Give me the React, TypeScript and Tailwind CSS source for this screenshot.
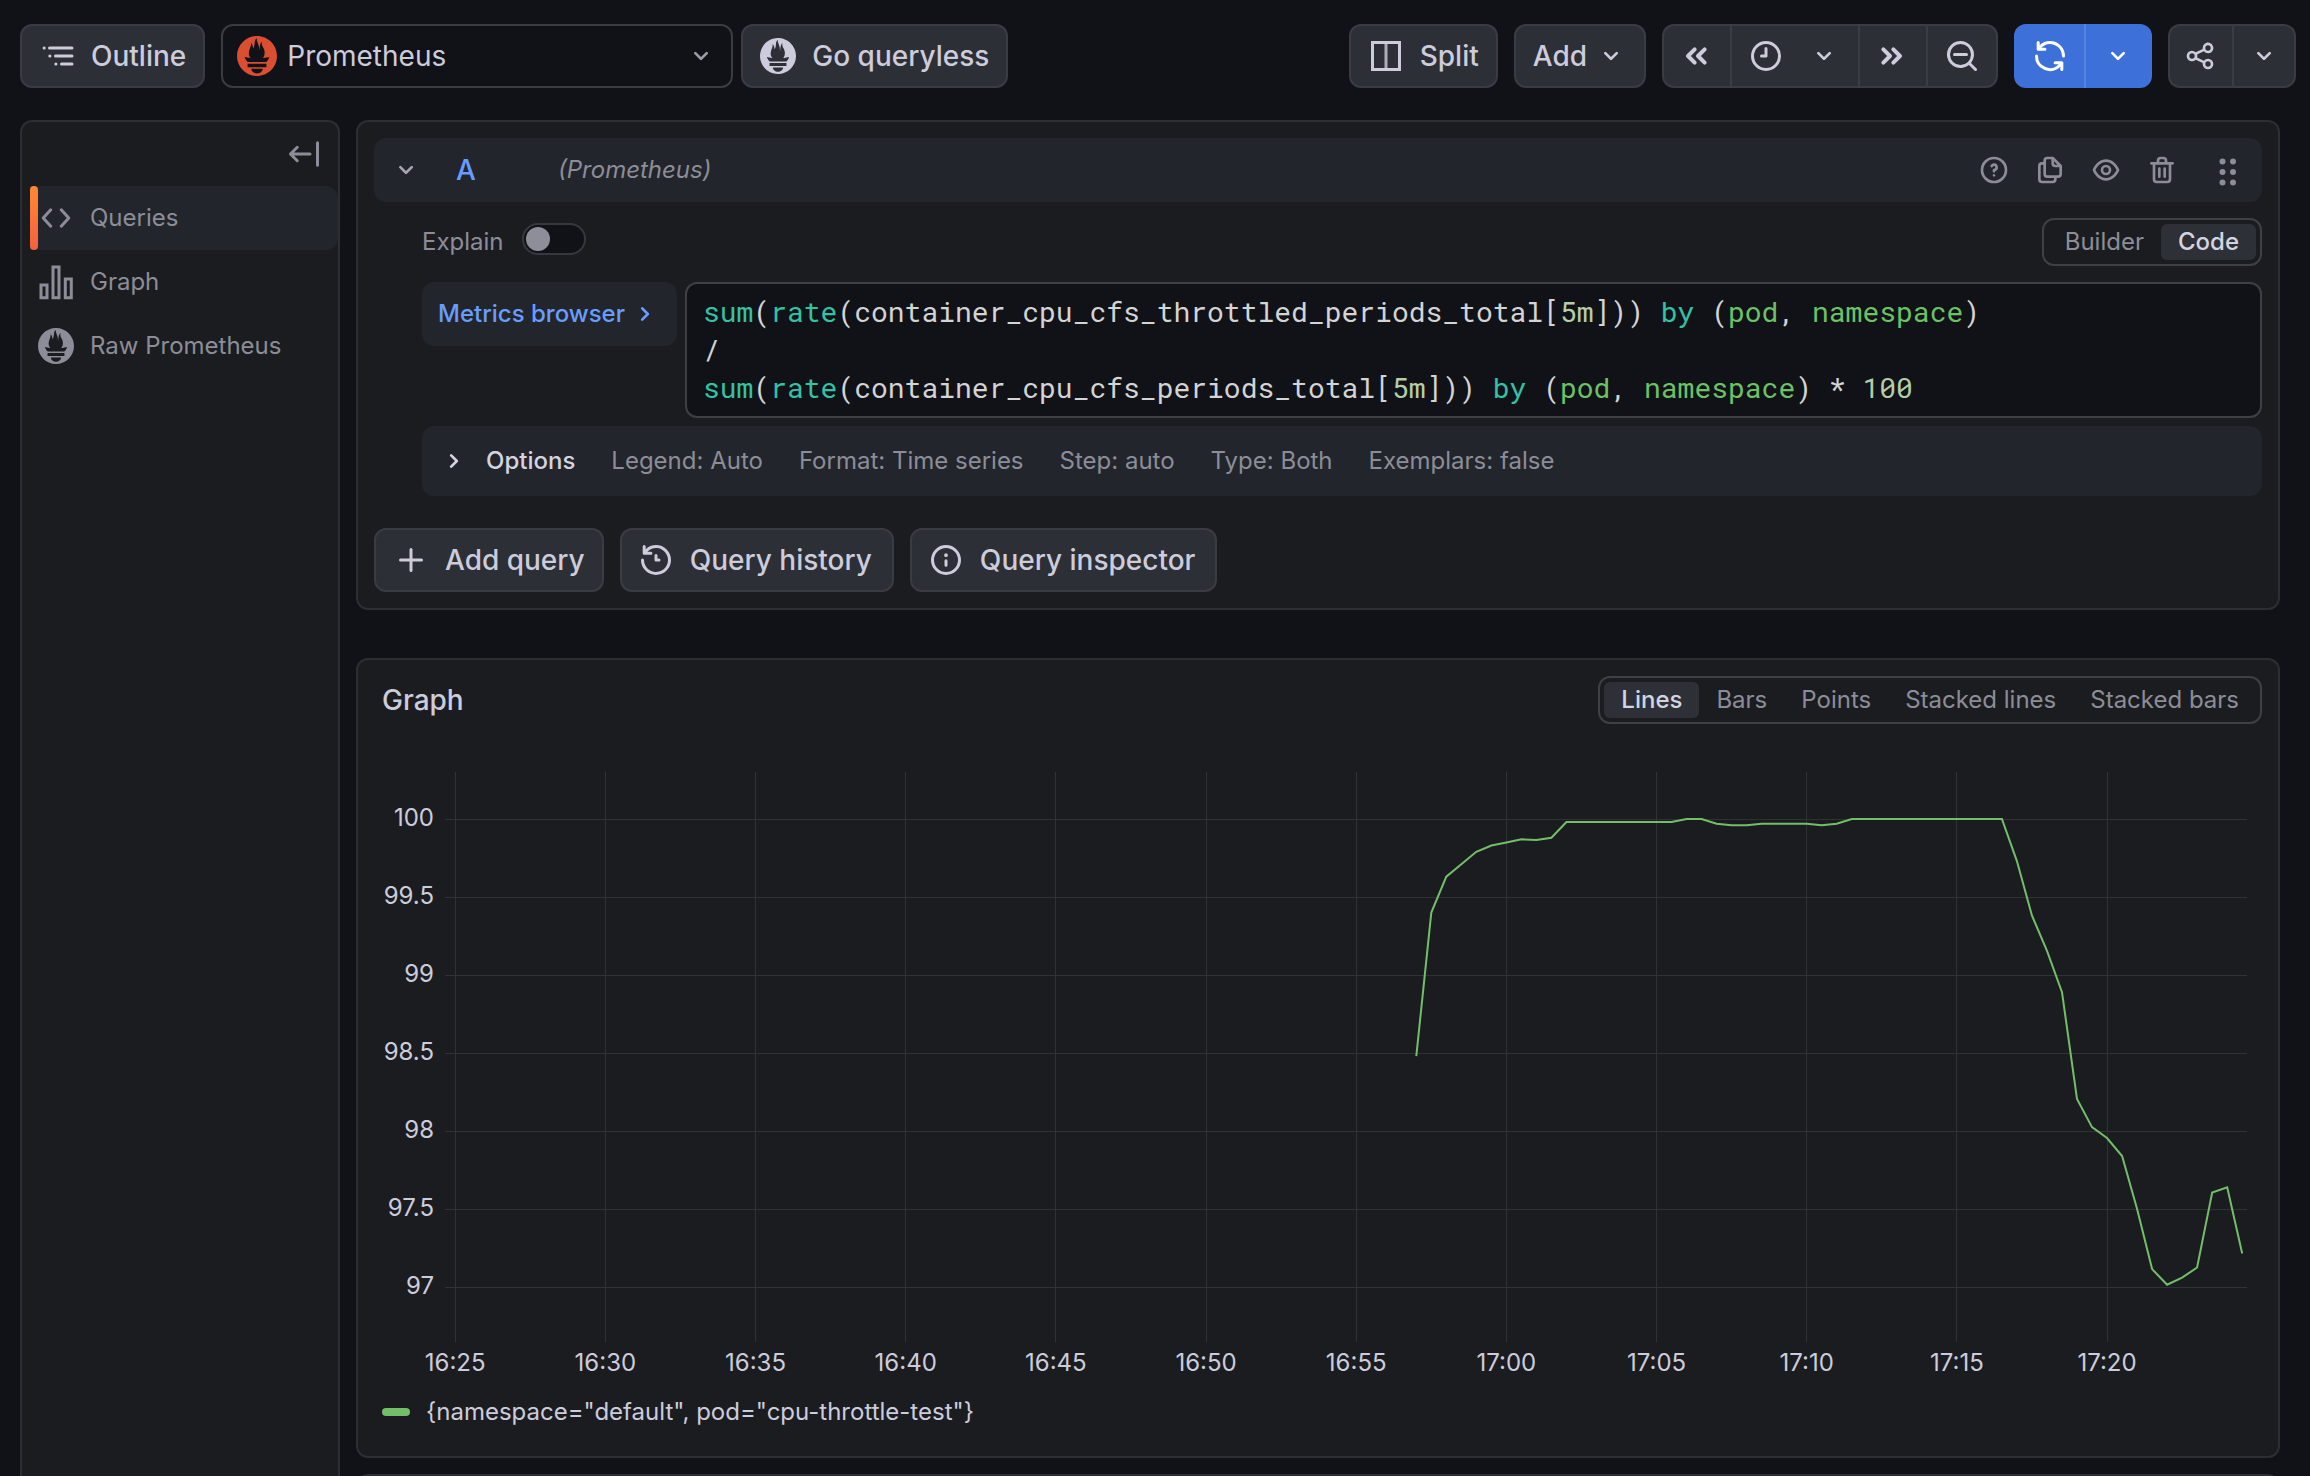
import { useLayoutEffect, useRef, useState, type ReactNode } from "react";
import { SiPrometheus } from "react-icons/si";
import clsx from "clsx";

const icons = {
  angleDown:
    "M17,9.17a1,1,0,0,0-1.41,0L12,12.71,8.46,9.17a1,1,0,0,0-1.41,0,1,1,0,0,0,0,1.42l4.24,4.24a1,1,0,0,0,1.42,0L17,10.59A1,1,0,0,0,17,9.17Z",
  angleRight:
    "M14.83,11.29,10.59,7.05a1,1,0,0,0-1.42,0,1,1,0,0,0,0,1.41L12.71,12,9.17,15.54a1,1,0,0,0,0,1.41,1,1,0,0,0,.71.29,1,1,0,0,0,.71-.29l4.24-4.24A1,1,0,0,0,14.83,11.29Z",
  clock:
    "M12,6a1,1,0,0,0-1,1v4H9a1,1,0,0,0,0,2h3a1,1,0,0,0,1-1V7A1,1,0,0,0,12,6Zm0-4A10,10,0,1,0,22,12,10,10,0,0,0,12,2Zm0,18a8,8,0,1,1,8-8A8,8,0,0,1,12,20Z",
  searchMinus:
    "M21.71,20.29,18,16.61A9,9,0,1,0,16.61,18l3.68,3.68a1,1,0,0,0,1.42,0A1,1,0,0,0,21.71,20.29ZM11,18a7,7,0,1,1,7-7A7,7,0,0,1,11,18ZM15,10H7a1,1,0,0,0,0,2h8a1,1,0,0,0,0-2Z",
  sync:
    "M19.91,15.51H15.38a1,1,0,0,0,0,2h2.4A8,8,0,0,1,4,12a1,1,0,0,0-2,0,10,10,0,0,0,16.88,7.23V21a1,1,0,0,0,2,0V16.5A1,1,0,0,0,19.91,15.51ZM12,2A10,10,0,0,0,5.12,4.77V3a1,1,0,0,0-2,0V7.5a1,1,0,0,0,1,1h4.5a1,1,0,0,0,0-2H6.22A8,8,0,0,1,20,12a1,1,0,0,0,2,0A10,10,0,0,0,12,2Z",
  history:
    "M12,2A10,10,0,0,0,5.12,4.77V3a1,1,0,0,0-2,0V7.5a1,1,0,0,0,1,1H8.62a1,1,0,0,0,0-2H6.22A8,8,0,1,1,4,12a1,1,0,0,0-2,0A10,10,0,1,0,12,2Zm0,6a1,1,0,0,0-1,1v3a1,1,0,0,0,1,1h2a1,1,0,0,0,0-2H13V9A1,1,0,0,0,12,8Z",
  question:
    "M11.29,15.29a1.58,1.58,0,0,0-.12.15.76.76,0,0,0-.09.18.64.64,0,0,0-.06.18,1.36,1.36,0,0,0,0,.2.84.84,0,0,0,.08.38.9.9,0,0,0,.54.54.94.94,0,0,0,.76,0,.9.9,0,0,0,.54-.54A1,1,0,0,0,13,16a1,1,0,0,0-.29-.71A1,1,0,0,0,11.29,15.29ZM12,2A10,10,0,1,0,22,12,10,10,0,0,0,12,2Zm0,18a8,8,0,1,1,8-8A8,8,0,0,1,12,20ZM12,7A3,3,0,0,0,9.4,8.5a1,1,0,1,0,1.73,1A1,1,0,0,1,12,9a1,1,0,0,1,0,2,1,1,0,0,0-1,1v1a1,1,0,0,0,2,0v-.18A3,3,0,0,0,12,7Z",
  copy:
    "M21,8.94a1.31,1.31,0,0,0-.06-.27l0-.09a1.07,1.07,0,0,0-.19-.28h0l-6-6h0a1.07,1.07,0,0,0-.28-.19.32.32,0,0,0-.09,0A.88.88,0,0,0,14.05,2H10A3,3,0,0,0,7,5V6H6A3,3,0,0,0,3,9V19a3,3,0,0,0,3,3h8a3,3,0,0,0,3-3V18h1a3,3,0,0,0,3-3V9S21,9,21,8.94ZM15,5.41,17.59,8H16a1,1,0,0,1-1-1ZM15,19a1,1,0,0,1-1,1H6a1,1,0,0,1-1-1V9A1,1,0,0,1,6,8H7v7a3,3,0,0,0,3,3h5Zm4-4a1,1,0,0,1-1,1H10a1,1,0,0,1-1-1V5a1,1,0,0,1,1-1h3V7a3,3,0,0,0,3,3h3Z",
  eye:
    "M21.92,11.6C19.9,6.91,16.1,4,12,4S4.1,6.91,2.08,11.6a1,1,0,0,0,0,.8C4.1,17.09,7.9,20,12,20s7.9-2.91,9.92-7.6A1,1,0,0,0,21.92,11.6ZM12,18c-3.17,0-6.17-2.29-7.9-6C5.83,8.29,8.83,6,12,6s6.17,2.29,7.9,6C18.17,15.71,15.17,18,12,18ZM12,8a4,4,0,1,0,4,4A4,4,0,0,0,12,8Zm0,6a2,2,0,1,1,2-2A2,2,0,0,1,12,14Z",
  trash:
    "M10,18a1,1,0,0,0,1-1V11a1,1,0,0,0-2,0v6A1,1,0,0,0,10,18ZM20,6H16V5a3,3,0,0,0-3-3H11A3,3,0,0,0,8,5V6H4A1,1,0,0,0,4,8H5V19a3,3,0,0,0,3,3h8a3,3,0,0,0,3-3V8h1a1,1,0,0,0,0-2ZM10,5a1,1,0,0,1,1-1h2a1,1,0,0,1,1,1V6H10Zm7,14a1,1,0,0,1-1,1H8a1,1,0,0,1-1-1V8H17Zm-3-1a1,1,0,0,0,1-1V11a1,1,0,0,0-2,0v6A1,1,0,0,0,14,18Z",
  share:
    "M18,14a4,4,0,0,0-3.08,1.48l-5.1-2.35a3.64,3.64,0,0,0,0-2.26l5.1-2.35A4,4,0,1,0,14,6a4.17,4.17,0,0,0,.07.71L8.79,9.14a4,4,0,1,0,0,5.72l5.28,2.43A4.17,4.17,0,0,0,14,18a4,4,0,1,0,4-4ZM18,4a2,2,0,1,1-2,2A2,2,0,0,1,18,4ZM6,14a2,2,0,1,1,2-2A2,2,0,0,1,6,14Zm12,6a2,2,0,1,1,2-2A2,2,0,0,1,18,20Z",
  info:
    "M12,2A10,10,0,1,0,22,12,10,10,0,0,0,12,2Zm0,18a8,8,0,1,1,8-8A8,8,0,0,1,12,20Zm0-8.5a1,1,0,0,0-1,1v3a1,1,0,0,0,2,0v-3A1,1,0,0,0,12,11.5Zm0-4a1.25,1.25,0,1,0,1.25,1.25A1.25,1.25,0,0,0,12,7.5Z",
  plus: "M19,11H13V5a1,1,0,0,0-2,0v6H5a1,1,0,0,0,0,2h6v6a1,1,0,0,0,2,0V13h6a1,1,0,0,0,0-2Z",
};

function Icon({ name, className = "size-8" }: { name: keyof typeof icons; className?: string }) {
  return (
    <svg viewBox="0 0 24 24" fill="currentColor" className={clsx("shrink-0", className)} aria-hidden="true">
      <path d={icons[name]} />
    </svg>
  );
}

function StrokeIcon({ children, width = 2, className = "size-9" }: { children: ReactNode; width?: number; className?: string }) {
  return (
    <svg
      viewBox="0 0 24 24"
      fill="none"
      stroke="currentColor"
      strokeWidth={width}
      strokeLinecap="round"
      strokeLinejoin="round"
      className={clsx("shrink-0", className)}
      aria-hidden="true"
    >
      {children}
    </svg>
  );
}

const button =
  "flex h-16 items-center border-2 border-[#3a3c43] bg-[#2d2f36] text-[28px] font-medium whitespace-nowrap text-[#ccccdc]";

function RadioGroup({ name, options, value }: { name: string; options: string[]; value: string }) {
  const [selected, setSelected] = useState(value);
  return (
    <div role="radiogroup" aria-label={name} className="flex h-12 rounded-xl border-2 border-[#3e4046] p-1">
      {options.map((option) => (
        <label
          key={option}
          className={clsx(
            "relative flex items-center rounded-md px-[17px] text-2xl",
            option === selected ? "bg-[#2e3037] font-medium text-[#d4d4e0]" : "text-[#8c8d98]"
          )}
        >
          <input
            type="radio"
            name={name}
            value={option}
            checked={option === selected}
            onChange={() => setSelected(option)}
            className="absolute inset-0 appearance-none"
          />
          {option}
        </label>
      ))}
    </div>
  );
}

function Toolbar() {
  return (
    <header className="flex items-center gap-4 pr-3.5 pl-5">
      <button className={clsx(button, "gap-4 rounded-xl px-[17px]")}>
        <StrokeIcon>
          <path d="M7 6.7h15M11 12h11M15 17.3h7M3.4 6.7h.1M7.2 12h.1M11.2 17.3h.1" />
        </StrokeIcon>
        Outline
      </button>
      <div className="flex items-center gap-2">
        <div className="relative flex w-[512px] items-center text-[#ccccdc]">
          <SiPrometheus className="pointer-events-none absolute left-4 size-10 text-[#da4e31]" />
          <select
            aria-label="Data source"
            className="h-16 w-full appearance-none rounded-xl border-2 border-[#3a3c43] bg-[#111217] pr-14 pl-16 text-[28px]"
          >
            <option>Prometheus</option>
          </select>
          <Icon name="angleDown" className="pointer-events-none absolute right-4 size-8 text-[#9c9ca8]" />
        </div>
        <button className={clsx(button, "gap-4 rounded-xl px-[17px]")}>
          <SiPrometheus className="size-9" />
          Go queryless
        </button>
      </div>
      <div className="ml-auto flex items-center gap-4">
        <button className={clsx(button, "gap-4 rounded-xl px-[17px]")}>
          <StrokeIcon>
            <path d="M3 3h18v18H3z" strokeLinejoin="miter" />
            <path d="M12 3v18" className="opacity-80" />
          </StrokeIcon>
          Split
        </button>
        <button className={clsx(button, "gap-2 rounded-xl px-[17px]")}>
          Add
          <Icon name="angleDown" />
        </button>
        <div className="flex">
          <button aria-label="Move time range back" className={clsx(button, "rounded-l-xl border-r-0 pr-4.5 pl-4")}>
            <StrokeIcon width={3} className="size-8">
              <path d="M11 7l-5 5 5 5M18.500 7l-5 5 5 5" />
            </StrokeIcon>
          </button>
          <button aria-label="Time range" className={clsx(button, "gap-6 border-r-0 pr-4.5 pl-4")}>
            <Icon name="clock" className="size-9" />
            <Icon name="angleDown" />
          </button>
          <button aria-label="Move time range forward" className={clsx(button, "border-r-0 pr-4.5 pl-4")}>
            <StrokeIcon width={3} className="size-8">
              <path d="M5.500 7l5 5-5 5M13 7l5 5-5 5" />
            </StrokeIcon>
          </button>
          <button aria-label="Zoom out time range" className={clsx(button, "rounded-r-xl px-4")}>
            <Icon name="searchMinus" className="size-9" />
          </button>
        </div>
        <div className="flex text-white">
          <button aria-label="Run query" className="flex h-16 items-center rounded-l-xl bg-[#3d71d9] pr-4 pl-4.5">
            <Icon name="sync" className="size-9" />
          </button>
          <button
            aria-label="Auto refresh interval"
            className="flex h-16 items-center rounded-r-xl border-l-2 border-[#5583df] bg-[#3d71d9] pr-4.5 pl-4"
          >
            <Icon name="angleDown" />
          </button>
        </div>
        <div className="flex">
          <button aria-label="Share" className={clsx(button, "rounded-l-xl border-r-0 pr-4 pl-3.5")}>
            <Icon name="share" />
          </button>
          <button aria-label="Share options" className={clsx(button, "rounded-r-xl px-3.5")}>
            <Icon name="angleDown" />
          </button>
        </div>
      </div>
    </header>
  );
}

function Sidebar() {
  const item = "flex h-16 w-full items-center gap-4 text-2xl";
  return (
    <nav className="w-80 shrink-0 rounded-t-xl border-2 border-b-0 border-[#2c2e34] bg-[#1b1c20] pl-2 text-[#8c8d98]">
      <div className="flex h-16 items-center justify-end pr-4">
        <button aria-label="Collapse outline">
          <StrokeIcon width={2} className="size-9">
            <path d="M3 12h13M7.500 7.500L3 12l4.500 4.500M21 4.500v15" />
          </StrokeIcon>
        </button>
      </div>
      <button className={clsx(item, "rounded-r-xl bg-[#22252b]")}>
        <span className="-mr-4 h-16 w-2 rounded-sm bg-linear-to-b from-[#ff8833] to-[#f55f3e]" />
        <StrokeIcon width={2} className="size-9">
          <path d="M8.500 6.500L3.500 12l5 5.500M15.500 6.500l5 5.500-5 5.500" />
        </StrokeIcon>
        Queries
      </button>
      <button className={clsx(item, "pl-2")}>
        <StrokeIcon width={2} className="size-9">
          <path d="M2 14h4v8.500H2zM10 2h4v20.500h-4zM18.200 10h4v12.500h-4z" strokeLinejoin="miter" />
        </StrokeIcon>
        Graph
      </button>
      <button className={clsx(item, "pl-2")}>
        <SiPrometheus className="size-9" />
        Raw Prometheus
      </button>
    </nav>
  );
}

const fn = "text-[#33c3a4]";
const num = "text-[#b5cea8]";
const lbl = "text-[#6cc264]";

const query = `sum(rate(container_cpu_cfs_throttled_periods_total[5m])) by (pod, namespace)
/
sum(rate(container_cpu_cfs_periods_total[5m])) by (pod, namespace) * 100`;

function tokenClass(token: string) {
  if (/^(sum|rate|by)$/.test(token)) return fn;
  if (/^(pod|namespace)$/.test(token)) return lbl;
  if (/^\d/.test(token)) return num;
  return undefined;
}

function QueryEditor() {
  const [value, setValue] = useState(query);
  const [editing, setEditing] = useState(false);
  const text =
    "px-4 py-[9px] font-['Roboto_Mono','Liberation_Mono',monospace] text-[28px] leading-[38px] whitespace-pre-wrap text-[#d4d4d4]";
  return (
    <div className="relative min-w-0 flex-1 rounded-xl border-2 border-[#3e4046] bg-[#111217]">
      <div aria-hidden="true" className={clsx(text, editing && "invisible")}>
        {value.split("\n").map((row, r) => (
          <div key={r} className="min-h-[38px]">
            {row.split(/(\b\w+\b)/).map((token, i) => (
              <span key={i} className={tokenClass(token)}>
                {token}
              </span>
            ))}
          </div>
        ))}
      </div>
      {/* plain text while typing, highlighted again on blur */}
      <textarea
        aria-label="PromQL query"
        spellCheck={false}
        value={editing ? value : ""}
        onFocus={() => setEditing(true)}
        onBlur={() => setEditing(false)}
        onChange={(e) => setValue(e.target.value)}
        className={clsx(text, "absolute inset-0 resize-none overflow-hidden outline-none")}
      />
    </div>
  );
}

function QueryPanel() {
  const summary = ["Legend: Auto", "Format: Time series", "Step: auto", "Type: Both", "Exemplars: false"];
  return (
    <section className="rounded-xl border-2 border-[#2c2e34] bg-[#1b1c20] p-4">
      <div className="flex h-16 items-center rounded-xl bg-[#22252b] pr-[18px] pl-4 text-[#8c8d98]">
        <button aria-label="Collapse query" className="mr-[34px]">
          <Icon name="angleDown" className="size-8 text-[#a5a6b2]" />
        </button>
        <span className="w-[102px] text-[28px] font-medium text-[#689dff]">A</span>
        <span className="text-2xl italic">(Prometheus)</span>
        <div className="ml-auto flex items-center gap-6">
          <button aria-label="Show data source help">
            <Icon name="question" />
          </button>
          <button aria-label="Duplicate query">
            <Icon name="copy" />
          </button>
          <button aria-label="Hide response">
            <Icon name="eye" />
          </button>
          <button aria-label="Remove query">
            <Icon name="trash" />
          </button>
          <svg viewBox="0 0 32 32" fill="currentColor" className="ml-2.5 size-8" aria-label="Drag and drop to reorder">
            {[7.5, 18, 28.5].map((y) => (
              <g key={y}>
                <circle cx="10.500" cy={y} r="3" />
                <circle cx="21" cy={y} r="3" />
              </g>
            ))}
          </svg>
        </div>
      </div>

      <div className="pt-4 pl-12">
        <div className="flex items-center justify-between">
          <div className="flex items-center gap-[18px] text-2xl text-[#8c8d98]">
            <label htmlFor="explain">Explain</label>
            <input
              id="explain"
              type="checkbox"
              role="switch"
              className="mb-1.5 h-8 w-16 appearance-none rounded-full border-2 border-[#36383e] bg-[#111217] p-0.5 before:block before:size-6 before:rounded-full before:bg-[#8e8e9a] checked:before:ml-8"
            />
          </div>
          <RadioGroup name="Editor mode" options={["Builder", "Code"]} value="Code" />
        </div>

        <div className="mt-4 flex items-start gap-2">
          <button className="flex h-16 items-center gap-1 rounded-xl bg-[#22252b] px-4 text-2xl font-medium text-[#689dff]">
            Metrics browser
            <Icon name="angleRight" />
          </button>
          <QueryEditor />
        </div>

        <div className="mt-2 flex h-[70px] items-center gap-9 rounded-xl bg-[#22252b] px-4 text-2xl text-[#8c8d98]">
          <button className="flex items-center gap-4 font-medium text-[#d4d4e0]">
            <Icon name="angleRight" />
            Options
          </button>
          {summary.map((s) => (
            <span key={s}>{s}</span>
          ))}
        </div>
      </div>

      <div className="mt-8 flex gap-4">
        <button className={clsx(button, "gap-4 rounded-xl px-[17px]")}>
          <Icon name="plus" className="size-9" />
          Add query
        </button>
        <button className={clsx(button, "gap-4 rounded-xl pr-5 pl-4")}>
          <Icon name="history" className="size-9" />
          Query history
        </button>
        <button className={clsx(button, "gap-4 rounded-xl pr-5 pl-4")}>
          <Icon name="info" className="size-9" />
          Query inspector
        </button>
      </div>
    </section>
  );
}

// one sample every 30s, the first at 16:57
const samples = [
  98.48, 99.4, 99.63, 99.71, 99.79, 99.83, 99.85, 99.87, 99.865, 99.88, 99.98, 99.98, 99.98, 99.98, 99.98, 99.98,
  99.98, 99.98, 100, 100, 99.97, 99.96, 99.96, 99.97, 99.97, 99.97, 99.97, 99.96, 99.97, 100, 100, 100, 100, 100, 100,
  100, 100, 100, 100, 100, 99.73, 99.38, 99.155, 98.89, 98.205, 98.025, 97.955, 97.84, 97.5, 97.115, 97.015, 97.06,
  97.125, 97.605, 97.64, 97.215,
];
const xTicks = ["16:25", "16:30", "16:35", "16:40", "16:45", "16:50", "16:55", "17:00", "17:05", "17:10", "17:15", "17:20"];
const yTicks = [100, 99.5, 99, 98.5, 98, 97.5, 97];

function TimeSeries() {
  const ref = useRef<HTMLDivElement>(null);
  const [width, setWidth] = useState(1888);

  useLayoutEffect(() => {
    const el = ref.current;
    if (!el) return;
    const observer = new ResizeObserver(() => setWidth(el.clientWidth));
    setWidth(el.clientWidth);
    observer.observe(el);
    return () => observer.disconnect();
  }, []);

  const left = 71;
  const right = width - 15;
  // minutes since 16:25, the window is one hour and starts 20s earlier
  const x = (min: number) => left + ((min + 0.34) * (right - left)) / 60;
  const y = (v: number) => 79 + (100 - v) * 156;
  const line = samples.map((v, i) => `${x(32 + i / 2).toFixed(1)},${y(v).toFixed(1)}`).join(" ");

  return (
    <div ref={ref} className="mt-4">
      <svg width={width} height={640} className="block font-['Inter',sans-serif] text-2xl" role="img" aria-label="Graph">
        <g stroke="#303236" strokeWidth="1" shapeRendering="crispEdges">
          {xTicks.map((t, i) => (
            <line key={t} x1={x(i * 5)} x2={x(i * 5)} y1={32} y2={602} />
          ))}
          {yTicks.map((t) => (
            <line key={t} x1={left} x2={right} y1={y(t)} y2={y(t)} />
          ))}
        </g>
        <g fill="#ccccdc">
          {xTicks.map((t, i) => (
            <text key={t} x={x(i * 5)} y={631} textAnchor="middle">
              {t}
            </text>
          ))}
          {yTicks.map((t) => (
            <text key={t} x={left - 11} y={y(t) + 7} textAnchor="end">
              {t}
            </text>
          ))}
        </g>
        <polyline points={line} fill="none" stroke="#73bf69" strokeWidth="2" />
      </svg>
    </div>
  );
}

function GraphPanel() {
  return (
    <section className="rounded-xl border-2 border-[#2c2e34] bg-[#1b1c20] px-4 pt-4 pb-7">
      <div className="flex items-center justify-between pl-2">
        <h2 className="text-[28px] font-medium text-[#ccccdc]">Graph</h2>
        <RadioGroup name="Graph style" options={["Lines", "Bars", "Points", "Stacked lines", "Stacked bars"]} value="Lines" />
      </div>
      <TimeSeries />
      <button className="mt-4 flex h-8 items-center gap-4 pl-2 text-2xl text-[#ccccdc]">
        <span className="h-2 w-7 rounded-full bg-[#73bf69]" />
        {`{namespace="default", pod="cpu-throttle-test"}`}
      </button>
    </section>
  );
}

export default function App() {
  return (
    <div className="flex h-screen flex-col gap-8 overflow-hidden bg-[#111217] pt-6 font-['Inter',sans-serif]">
      <Toolbar />
      <div className="flex min-h-0 flex-1 gap-4 pr-[30px] pl-5">
        <Sidebar />
        <main className="min-w-0 flex-1">
          <QueryPanel />
          <div className="mt-12">
            <GraphPanel />
          </div>
          <section className="mt-4 h-16 rounded-xl border-2 border-[#2c2e34] bg-[#1b1c20]" />
        </main>
      </div>
    </div>
  );
}
